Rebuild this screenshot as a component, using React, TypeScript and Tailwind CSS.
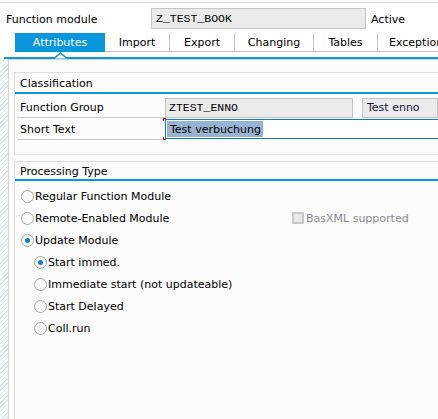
import React from "react";

const hatch =
  "bg-[repeating-linear-gradient(135deg,#d6e4f1_0px,#d6e4f1_1px,#ffffff_1px,#ffffff_3px)]";

function Radio({ checked }: { checked?: boolean }) {
  return (
    <span className="w-[13px] h-[13px] rounded-full border border-[#a8a8a8] bg-[#fbfbfb] flex items-center justify-center shrink-0">
      {checked && <span className="w-[5px] h-[5px] rounded-full bg-[#0a7bd0]" />}
    </span>
  );
}

function RadioRow({ label, checked, indent }: { label: string; checked?: boolean; indent?: boolean }) {
  return (
    <div className={`h-[22px] flex items-center ${indent ? "pl-[19px]" : "pl-[6px]"}`}>
      <Radio checked={checked} />
      <span className="ml-[1px]">{label}</span>
    </div>
  );
}

function Tab({ label, active, w }: { label: string; active?: boolean; w: string }) {
  return (
    <div
      className={`${w} h-[19px] flex items-center justify-center shrink-0 ${
        active ? "bg-[#0a96dc] text-white" : "border-r border-b border-[#c4c4c4] bg-white text-black"
      }`}
    >
      {label}
    </div>
  );
}

export default function App() {
  return (
    <div className="w-[438px] h-[419px] bg-white overflow-hidden font-['DejaVu_Sans',sans-serif] text-[11px] text-black leading-none">
      <div className="h-[2px]" />
      <div className="h-[1px] bg-[#dcdcdc]" />

      {/* header */}
      <div className="flex items-center h-[21px] mt-[5px]">
        <div className="w-[151px] pl-[6px] pt-[1px]">Function module</div>
        <div className="w-[215px] h-[21px] bg-[#ebebeb] border border-[#c4c4c4] flex items-center pl-[4px] font-['Liberation_Mono',monospace] text-[11.5px]">
          Z_TEST_BOOK
        </div>
        <div className="pl-[5px] pt-[1px]">Active</div>
      </div>

      {/* tabs */}
      <div className="flex mt-[4px] pl-[15px] h-[19px]">
        <Tab label="Attributes" active w="w-[90px]" />
        <Tab label="Import" w="w-[65px]" />
        <Tab label="Export" w="w-[65px]" />
        <Tab label="Changing" w="w-[79px]" />
        <Tab label="Tables" w="w-[64px]" />
        <div className="h-[19px] flex-1 border-b border-[#c4c4c4] pl-[11px] flex items-center whitespace-nowrap overflow-hidden">
          Exceptions
        </div>
      </div>
      <div className="relative mt-[5px] ml-[4px] h-[2px] bg-[#0a96dc]">
        <svg className="absolute left-[50px] top-[-5px]" width="13" height="7" viewBox="0 0 13 7">
          <polyline points="0,6.5 6.5,1 13,6.5" fill="white" stroke="#0a96dc" strokeWidth="1.5" />
        </svg>
      </div>

      {/* panel */}
      <div className={`flex h-[360px] ${hatch}`}>
        <div className="w-[8px] shrink-0" />
        <div className="flex-1 flex flex-col">
          <div className="h-[6px]" />
          <div className="flex-1 border-l border-t border-b border-[#d4d4d4] bg-[#fcfcfc] pl-[5px] pt-[12px]">
            {/* Classification */}
            <div className="border-l border-t border-b border-[#dedede] h-[83px]">
              <div className="h-[19px] flex items-center pl-[5px] pt-[2px]">Classification</div>
              <div className="h-[2px] bg-[#0a96dc]" />
              <div className="flex items-center h-[24px] pt-[3px]">
                <div className="w-[148px] h-[21px] ml-[2px] border-b border-[#c8c8c8] flex items-center pl-[3px] pt-[1px]">
                  Function Group
                </div>
                <div className="w-[188px] h-[20px] bg-[#ebebeb] border border-[#c4c4c4] flex items-center pl-[3px] font-['Liberation_Mono',monospace] text-[11.5px]">
                  ZTEST_ENNO
                </div>
                <div className="ml-[9px] flex-1 h-[20px] bg-[#ebebeb] border border-[#c4c4c4] flex items-center pl-[4px] text-[#14143c]">
                  Test enno
                </div>
              </div>
              <div className="flex items-center h-[22px]">
                <div className="w-[148px] h-[22px] ml-[2px] border-b border-[#c8c8c8] flex items-center pl-[3px] pt-[1px]">
                  Short Text
                </div>
                <div className="relative flex-1 h-[20px] border-t border-b border-l border-[#0a7fc6] bg-white flex items-center pl-[1px]">
                  <span className="absolute left-[-3px] top-[-2px] w-[3px] h-[3px] border-l border-t border-[#d20000]" />
                  <span className="absolute left-[-3px] bottom-[-2px] w-[3px] h-[3px] border-l border-b border-[#d20000]" />
                  <span className="bg-[#99b4d1] h-[16px] flex items-center pl-[3px] pr-[2px]">Test verbuchung</span>
                </div>
              </div>
            </div>

            {/* Processing Type */}
            <div className="mt-[6px] border-l border-t border-[#dedede] h-[260px]">
              <div className="h-[17px] flex items-center pl-[5px] pt-[2px]">Processing Type</div>
              <div className="h-[2px] bg-[#0a96dc]" />
              <div className="pt-[4px]">
                <RadioRow label="Regular Function Module" />
                <div className="flex items-center">
                  <div className="w-[277px]">
                    <RadioRow label="Remote-Enabled Module" />
                  </div>
                  <span className="w-[12px] h-[12px] border-2 border-[#c9c9c9] bg-[#e6eaee] shrink-0" />
                  <span className="ml-[2px] text-[#8a8a9a]">BasXML supported</span>
                </div>
                <RadioRow label="Update Module" checked />
                <RadioRow label="Start immed." checked indent />
                <RadioRow label="Immediate start (not updateable)" indent />
                <RadioRow label="Start Delayed" indent />
                <RadioRow label="Coll.run" indent />
              </div>
            </div>
          </div>
        </div>
      </div>
    </div>
  );
}
